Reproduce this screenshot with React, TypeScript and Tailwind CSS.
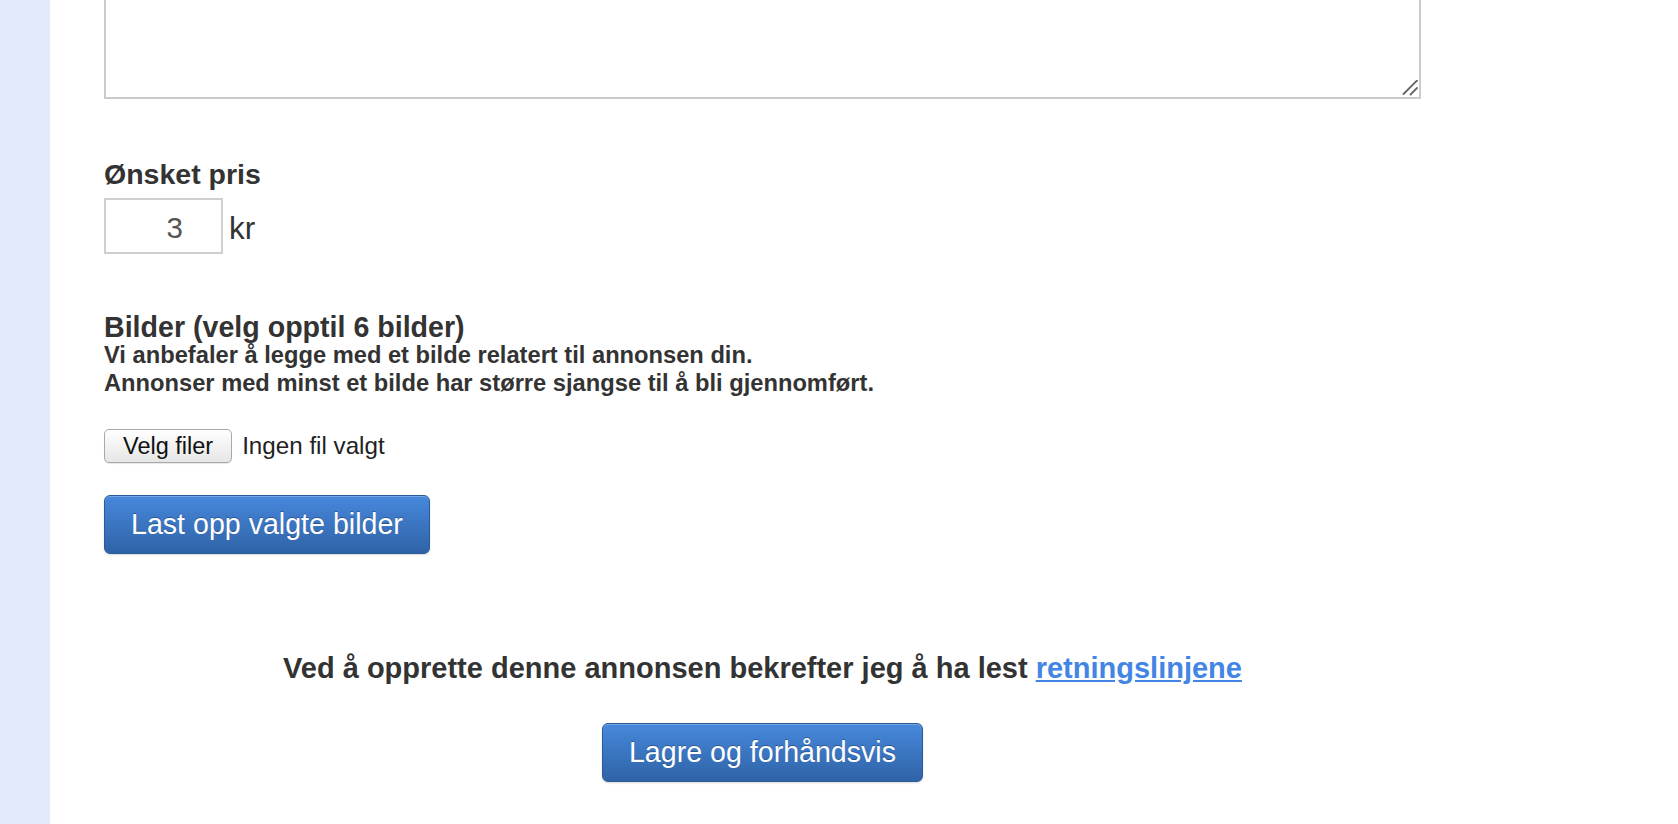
import React from "react";

const font = { fontFamily: '"Liberation Sans", Arial, Helvetica, sans-serif' };

function PrimaryButton({ children }: { children: React.ReactNode }) {
  return (
    <button
      type="button"
      className="h-[59px] px-[26px] rounded-[6px] border border-[#285b98] bg-gradient-to-b from-[#4788dc] to-[#2f63a7] text-white text-[28.6px] leading-[33px] [text-shadow:0_-1px_0_rgba(0,0,0,0.3)] shadow-[inset_0_1px_0_rgba(255,255,255,0.25),0_1px_2px_rgba(0,0,0,0.15)]"
    >
      {children}
    </button>
  );
}

export default function App() {
  return (
    <div className="flex min-h-[824px] bg-white text-[#333]" style={font}>
      <div className="w-[50px] shrink-0 bg-[#e3eaf9]" />
      <div className="flex-1 pl-[54px]">
        <div className="w-[1317px] flex flex-col">
          <div className="relative w-[1317px] h-[99px]">
            <textarea
              className="block w-full h-full border-2 border-t-0 border-[#cbcbcb] bg-white resize-none outline-none"
              defaultValue=""
            />
            <svg
              className="absolute right-[3px] bottom-[3px] pointer-events-none"
              width="16"
              height="16"
              viewBox="0 0 16 16"
            >
              <line x1="1.5" y1="14" x2="15" y2="0.5" stroke="#666" strokeWidth="1.8" strokeLinecap="round" />
              <line x1="8.5" y1="14.5" x2="15" y2="8" stroke="#666" strokeWidth="1.8" strokeLinecap="round" />
            </svg>
          </div>

          <label className="mt-[59px] text-[28.5px] leading-[33px] font-bold">Ønsket pris</label>
          <div className="mt-[7px] flex items-center gap-[6px]">
            <input
              type="text"
              defaultValue="3"
              className="w-[119px] h-[56px] border-2 border-[#cfcfcf] bg-white text-right pr-[38px] pt-[4px] text-[29.5px] text-[#555] outline-none"
              style={font}
            />
            <span className="text-[31.5px] leading-[35px] mt-[4px]">kr</span>
          </div>

          <div className="mt-[59px] text-[28.6px] leading-[28px] font-bold">Bilder (velg opptil 6 bilder)</div>
          <div className="text-[23.7px] leading-[28px] font-bold">
            <div>Vi anbefaler å legge med et bilde relatert til annonsen din.</div>
            <div>Annonser med minst et bilde har større sjangse til å bli gjennomført.</div>
          </div>

          <div className="mt-[32px] flex items-center gap-[10px]">
            <button
              type="button"
              className="h-[34px] px-[18px] rounded-[5px] border border-[#a9a9a9] bg-gradient-to-b from-[#ffffff] to-[#e6e6e6] text-[23.5px] leading-[28px] text-[#111] shadow-[0_1px_1px_rgba(0,0,0,0.1)]"
            >
              Velg filer
            </button>
            <span className="text-[24.2px] leading-[28px] text-[#222]">Ingen fil valgt</span>
          </div>

          <div className="mt-[32px]">
            <PrimaryButton>Last opp valgte bilder</PrimaryButton>
          </div>

          <p className="mt-[98px] text-center text-[29px] leading-[33px] font-bold">
            Ved å opprette denne annonsen bekrefter jeg å ha lest{" "}
            <a href="#" className="text-[#4285e4] underline">
              retningslinjene
            </a>
          </p>

          <div className="mt-[38px] flex justify-center">
            <PrimaryButton>Lagre og forhåndsvis</PrimaryButton>
          </div>
        </div>
      </div>
    </div>
  );
}
